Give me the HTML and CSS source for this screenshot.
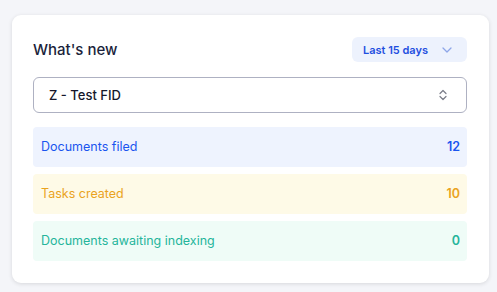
FILE: index.html
```html
<!DOCTYPE html>
<html lang="en">
<head>
  <meta charset="UTF-8">
  <title>What's new</title>
  <link rel="stylesheet" href="styles.css">
</head>
<body>
  <div class="card">
    <div class="card-head">
      <h2>What's new</h2>
      <button class="range-btn">
        Last 15 days
        <svg width="10" height="6" viewBox="0 0 10 6"><path d="M1 1l4 4 4-4" fill="none" stroke="#8ea6e8" stroke-width="1.3" stroke-linecap="round" stroke-linejoin="round"/></svg>
      </button>
    </div>
    <div class="select">
      <span>Z - Test FID</span>
      <svg width="8" height="12" viewBox="0 0 8 12"><path d="M1 4.5l3-3 3 3M1 7.5l3 3 3-3" fill="none" stroke="#7a7d88" stroke-width="1.2" stroke-linecap="round" stroke-linejoin="round"/></svg>
    </div>
    <div class="stats">
      <div class="stat blue"><span>Documents filed</span><b>12</b></div>
      <div class="stat amber"><span>Tasks created</span><b>10</b></div>
      <div class="stat teal"><span>Documents awaiting indexing</span><b>0</b></div>
    </div>
  </div>
</body>
</html>
```

FILE: styles.css
```css
body {
  margin: 0;
  padding: 15px 8px 10px 12px;
  background: #f4f5f9;
  font-family: Inter, "Noto Sans", sans-serif;
}
.card {
  width: 477px;
  box-sizing: border-box;
  background: #fff;
  border-radius: 9px;
  box-shadow: 0 1px 4px #0000001f;
  padding: 22px 22px 22px 21px;
}
.card-head {
  display: flex;
  align-items: center;
  justify-content: space-between;
  height: 25px;
}
h2 {
  margin: 0;
  font-size: 15px;
  font-weight: 500;
  color: #1b1f3b;
}
.range-btn {
  display: flex;
  align-items: center;
  gap: 14px;
  height: 25px;
  padding: 0 15px 0 11px;
  border: none;
  border-radius: 6px;
  background: #edf2fd;
  color: #1f4fe0;
  font-family: inherit;
  font-size: 11px;
  font-weight: 600;
}
.select {
  display: flex;
  align-items: center;
  justify-content: space-between;
  height: 36px;
  box-sizing: border-box;
  margin-top: 15px;
  padding: 0 19px 0 15px;
  border: 1px solid #aeb1c2;
  border-radius: 6px;
  font-size: 13px;
  font-weight: 500;
  color: #15182b;
}
.stats {
  display: flex;
  flex-direction: column;
  gap: 7px;
  margin-top: 14px;
}
.stat {
  display: flex;
  align-items: center;
  justify-content: space-between;
  height: 40px;
  padding: 0 7px 1px 8px;
  box-sizing: border-box;
  border-radius: 4px;
  font-size: 12.5px;
}
.stat b {
  font-weight: 600;
}
.blue { background: #eef3fe; color: #1a55ef; }
.amber { background: #fefae7; color: #eaa31e; }
.teal { background: #effcf7; color: #25b59b; }
```
